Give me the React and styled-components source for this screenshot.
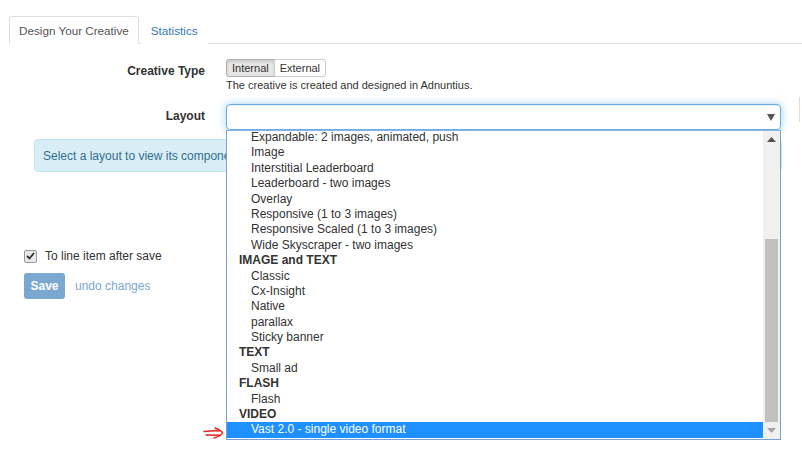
import React from 'react'
import styled, { createGlobalStyle } from 'styled-components'

const GlobalStyle = createGlobalStyle`
  html, body {
    margin: 0;
    padding: 0;
    background: #fff;
  }
  body {
    font-family: "Liberation Sans", Arial, sans-serif;
    font-size: 12px;
    color: #333;
  }
`

const Page = styled.div`
  position: relative;
  width: 802px;
  height: 464px;
  overflow: hidden;
  padding-top: 16px;
  box-sizing: border-box;
`

const TabBar = styled.ul`
  display: flex;
  list-style: none;
  margin: 0 0 0 9px;
  padding: 0;
  height: 27px;
  border-bottom: 1px solid #ddd;
`

const Tab = styled.li`
  display: flex;
  align-items: center;
  padding: 0 9px;
  margin-right: 2px;
  margin-bottom: -1px;
  border: 1px solid ${p => (p.active ? '#ddd' : 'transparent')};
  border-bottom-color: ${p => (p.active ? '#fff' : 'transparent')};
  border-radius: 4px 4px 0 0;
  background: #fff;
  color: ${p => (p.active ? '#555' : '#337ab7')};
  font-size: 11.7px;
`

const Form = styled.div`
  margin-top: 15px;
`

const FormRow = styled.div`
  display: grid;
  grid-template-columns: 205px 555px;
  column-gap: 21px;
  margin-bottom: ${p => p.gap || 0}px;
`

const Label = styled.label`
  text-align: right;
  font-weight: bold;
  font-size: 12px;
  padding-top: ${p => p.top || 0}px;
`

const BtnGroup = styled.div`
  display: inline-flex;
`

const ToggleBtn = styled.span`
  display: inline-flex;
  align-items: center;
  height: 16px;
  padding: 0 5px;
  font-size: 11px;
  color: #333;
  border: 1px solid #ccc;
  background: ${p => (p.active ? '#e6e6e6' : '#fff')};
  box-shadow: ${p => (p.active ? 'inset 0 2px 3px rgba(0,0,0,.125)' : 'none')};
  border-color: ${p => (p.active ? '#adadad' : '#ccc')};
  &:first-child {
    border-radius: 3px 0 0 3px;
  }
  &:last-child {
    border-radius: 0 3px 3px 0;
    margin-left: -1px;
  }
`

const HelpText = styled.div`
  font-size: 11px;
  margin-top: 2px;
  line-height: 13px;
`

const SelectWrap = styled.div`
  position: relative;
`

const SelectBox = styled.div`
  height: 24px;
  border: 1px solid #66afe9;
  border-radius: 4px;
  box-shadow: inset 0 1px 1px rgba(0,0,0,.075), 0 0 8px rgba(102,175,233,.6);
  background: #fff;
  display: flex;
  align-items: center;
  justify-content: flex-end;
  padding-right: 5px;
`

const DropList = styled.div`
  position: absolute;
  left: 0;
  top: 26px;
  width: 555px;
  height: 310px;
  border: 1px solid #7a9fd6;
  border-top-color: #8eb1e0;
  background: #fff;
  box-sizing: border-box;
  display: flex;
  z-index: 5;
`

const ListBody = styled.div`
  flex: 1;
  overflow: hidden;
`

const ListInner = styled.div`
  margin-top: -1px;
`

const Row = styled.div`
  height: 15.4px;
  line-height: 15.4px;
  font-size: 12px;
  white-space: nowrap;
  padding-left: ${p => (p.group ? 12 : 24)}px;
  font-weight: ${p => (p.group ? 'bold' : 'normal')};
  color: ${p => (p.selected ? '#fff' : '#333')};
  background: ${p => (p.selected ? '#1e90ff' : 'transparent')};
`

const Scrollbar = styled.div`
  width: 17px;
  background: #f0f0f0;
  display: flex;
  flex-direction: column;
  align-items: center;
`

const ScrollArrow = styled.div`
  height: 17px;
  display: flex;
  align-items: center;
  justify-content: center;
`

const Track = styled.div`
  flex: 1;
  width: 100%;
  display: flex;
  flex-direction: column;
  align-items: center;
`

const Thumb = styled.div`
  width: 13px;
  background: #c1c1c1;
  margin-top: auto;
`

const RedArrow = styled.svg`
  position: absolute;
  left: -24px;
  bottom: 0;
`

const EdgeMark = styled.div`
  position: absolute;
  right: 0;
  top: 97px;
  width: 2px;
  height: 25px;
  border-left: 1px solid #ddd;
`

const Alert = styled.div`
  margin: 9px 20px 0 34px;
  height: 31px;
  display: flex;
  align-items: center;
  padding-left: 8px;
  background: #d9edf7;
  border: 1px solid #bce8f1;
  border-radius: 4px;
  color: #31708f;
  font-size: 12px;
`

const CheckRow = styled.label`
  display: flex;
  align-items: center;
  gap: 8px;
  margin: 77px 0 0 24px;
  font-size: 12px;
`

const CheckBox = styled.span`
  width: 11px;
  height: 11px;
  border: 1px solid #999;
  border-radius: 2px;
  background: #e8e8e8;
  display: flex;
  align-items: center;
  justify-content: center;
`

const Actions = styled.div`
  display: flex;
  align-items: center;
  gap: 10px;
  margin: 10px 0 0 24px;
`

const SaveButton = styled.span`
  display: inline-flex;
  align-items: center;
  justify-content: center;
  height: 26px;
  width: 41px;
  border-radius: 3px;
  background: #7aa8d0;
  color: #fff;
  font-weight: bold;
  font-size: 12px;
`

const UndoLink = styled.span`
  color: #7aa8d0;
  font-size: 12px;
`

const options = [
  { label: 'Expandable: 2 images, animated, push' },
  { label: 'Image' },
  { label: 'Interstitial Leaderboard' },
  { label: 'Leaderboard - two images' },
  { label: 'Overlay' },
  { label: 'Responsive (1 to 3 images)' },
  { label: 'Responsive Scaled (1 to 3 images)' },
  { label: 'Wide Skyscraper - two images' },
  { label: 'IMAGE and TEXT', group: true },
  { label: 'Classic' },
  { label: 'Cx-Insight' },
  { label: 'Native' },
  { label: 'parallax' },
  { label: 'Sticky banner' },
  { label: 'TEXT', group: true },
  { label: 'Small ad' },
  { label: 'FLASH', group: true },
  { label: 'Flash' },
  { label: 'VIDEO', group: true },
  { label: 'Vast 2.0 - single video format', selected: true }
]

export default function App () {
  return (
    <Page>
      <GlobalStyle />
      <TabBar>
        <Tab active>Design Your Creative</Tab>
        <Tab>Statistics</Tab>
      </TabBar>
      <Form>
        <FormRow gap={12}>
          <Label top={5}>Creative Type</Label>
          <div>
            <BtnGroup>
              <ToggleBtn active>Internal</ToggleBtn>
              <ToggleBtn>External</ToggleBtn>
            </BtnGroup>
            <HelpText>The creative is created and designed in Adnuntius.</HelpText>
          </div>
        </FormRow>
        <FormRow>
          <Label top={5}>Layout</Label>
          <SelectWrap>
            <SelectBox>
              <svg width="8" height="7" viewBox="0 0 8 7">
                <path d="M0 0 L8 0 L4 7 Z" fill="#555" />
              </svg>
            </SelectBox>
            <DropList>
              <RedArrow width="22" height="12" viewBox="0 0 22 12">
                <path d="M1 4.5 C6 4, 12 3.5, 16 4" stroke="#e8231b" strokeWidth="1.4" fill="none" strokeLinecap="round" />
                <path d="M3 8 C8 8, 13 8, 17 8.2" stroke="#e8231b" strokeWidth="1.4" fill="none" strokeLinecap="round" />
                <path d="M12 1 C16 2.5, 19 4.5, 19.5 6 C18 8.5, 15 10, 11 11" stroke="#e8231b" strokeWidth="1.4" fill="none" strokeLinecap="round" />
              </RedArrow>
              <ListBody>
                <ListInner>
                  {options.map((o, i) => (
                    <Row key={i} group={o.group} selected={o.selected}>{o.label}</Row>
                  ))}
                </ListInner>
              </ListBody>
              <Scrollbar>
                <ScrollArrow>
                  <svg width="9" height="5" viewBox="0 0 9 5">
                    <path d="M0 5 L9 5 L4.5 0 Z" fill="#505050" />
                  </svg>
                </ScrollArrow>
                <Track>
                  <Thumb style={{ height: 183 }} />
                </Track>
                <ScrollArrow>
                  <svg width="9" height="5" viewBox="0 0 9 5">
                    <path d="M0 0 L9 0 L4.5 5 Z" fill="#a3a3a3" />
                  </svg>
                </ScrollArrow>
              </Scrollbar>
            </DropList>
          </SelectWrap>
        </FormRow>
      </Form>
      <EdgeMark />
      <Alert>Select a layout to view its components</Alert>
      <CheckRow>
        <CheckBox>
          <svg width="9" height="8" viewBox="0 0 9 8">
            <path d="M1 4 L3.5 6.5 L8 1" stroke="#333" strokeWidth="1.8" fill="none" />
          </svg>
        </CheckBox>
        To line item after save
      </CheckRow>
      <Actions>
        <SaveButton>Save</SaveButton>
        <UndoLink>undo changes</UndoLink>
      </Actions>
    </Page>
  )
}
